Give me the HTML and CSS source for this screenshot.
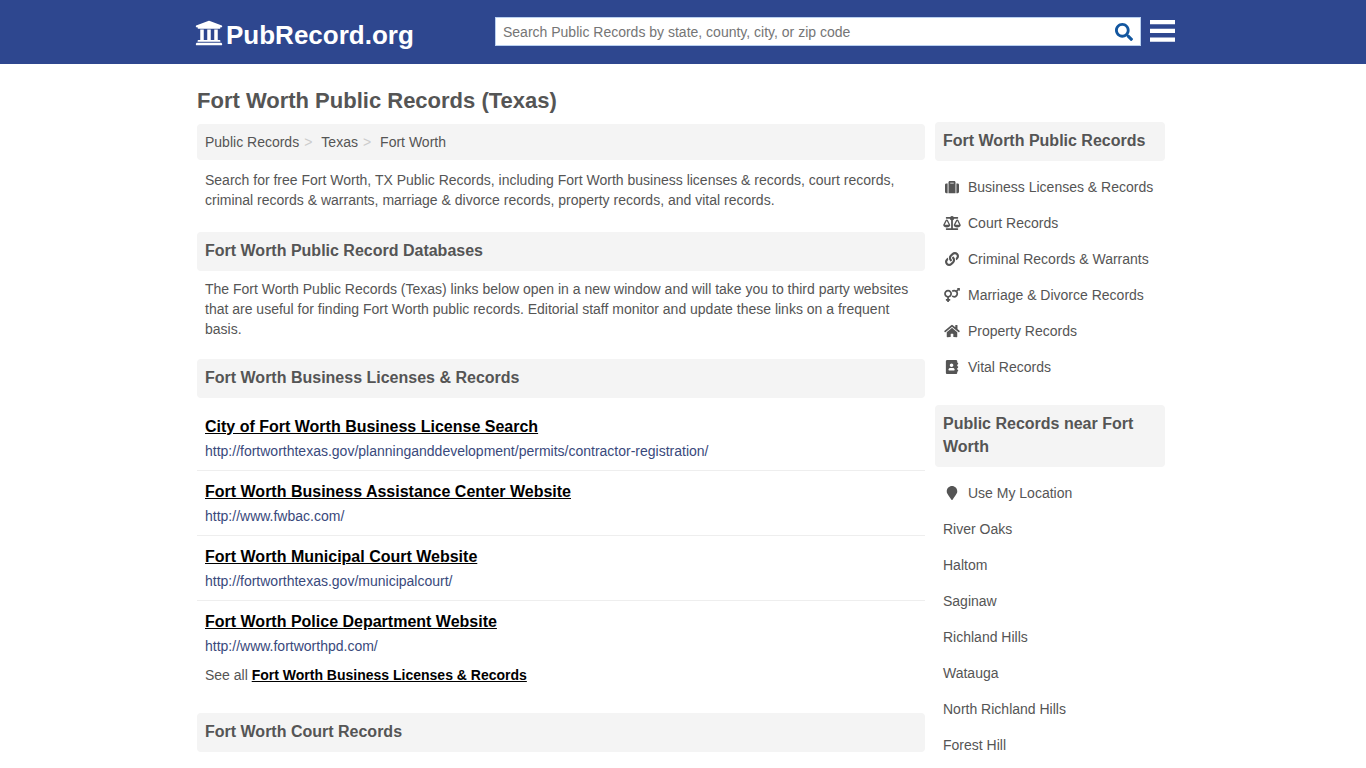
FILE: index.html
```html
<!DOCTYPE html>
<html lang="en">
<head>
<meta charset="utf-8">
<meta name="viewport" content="width=device-width, initial-scale=1">
<title>Fort Worth Public Records (Texas)</title>
<link rel="stylesheet" href="styles.css">
</head>
<body>
<header class="site-header">
  <div class="container header-row">
    <a class="logo" href="#">
      <svg class="logo-icon" viewBox="0 0 512 512" aria-hidden="true"><path d="M496 128v16a8 8 0 0 1-8 8h-24v12c0 6.627-5.373 12-12 12H60c-6.627 0-12-5.373-12-12v-12H24a8 8 0 0 1-8-8v-16a8 8 0 0 1 4.941-7.392l232-88a7.996 7.996 0 0 1 6.118 0l232 88A8 8 0 0 1 496 128zm-24 304H40c-13.255 0-24 10.745-24 24v16a8 8 0 0 0 8 8h464a8 8 0 0 0 8-8v-16c0-13.255-10.745-24-24-24zM96 192v192H60c-6.627 0-12 5.373-12 12v20h416v-20c0-6.627-5.373-12-12-12h-36V192h-64v192h-64V192h-64v192h-64V192H96z"/></svg>
      <span>PubRecord.org</span>
    </a>
    <form class="search" role="search">
      <input class="search-input" type="text" aria-label="Search Public Records" placeholder="Search Public Records by state, county, city, or zip code">
      <button class="search-button" type="button" aria-label="Search">
        <svg class="search-icon" viewBox="0 0 512 512" aria-hidden="true"><path d="M505 442.700L405.300 343c-4.500-4.500-10.600-7-17-7H372c27.600-35.300 44-79.700 44-128C416 93.100 322.900 0 208 0S0 93.100 0 208s93.100 208 208 208c48.300 0 92.700-16.400 128-44v16.300c0 6.400 2.500 12.500 7 17l99.700 99.700c9.400 9.400 24.600 9.400 33.900 0l28.300-28.300c9.400-9.400 9.400-24.600.1-34zM208 336c-70.700 0-128-57.200-128-128 0-70.700 57.200-128 128-128 70.700 0 128 57.200 128 128 0 70.700-57.200 128-128 128z"/></svg>
      </button>
    </form>
    <button class="menu-button" type="button" aria-label="Menu">
      <svg class="menu-icon" viewBox="0 0 25 22" aria-hidden="true"><path d="M0 0h25v4.200H0zM0 8.800h25v4.200H0zM0 17.500h25v4.200H0z"/></svg>
    </button>
  </div>
</header>

<div class="container page">
  <main class="main">
    <h1 class="page-title">Fort Worth Public Records (Texas)</h1>
    <nav class="breadcrumb" aria-label="Breadcrumb">
      <a href="#">Public Records</a><span class="sep">&gt;</span>
      <a href="#">Texas</a><span class="sep">&gt;</span>
      <a href="#">Fort Worth</a>
    </nav>
    <p class="text">Search for free Fort Worth, TX Public Records, including Fort Worth business licenses &amp; records, court records, criminal records &amp; warrants, marriage &amp; divorce records, property records, and vital records.</p>

    <section class="section">
      <h2 class="heading">Fort Worth Public Record Databases</h2>
      <p class="text">The Fort Worth Public Records (Texas) links below open in a new window and will take you to third party websites that are useful for finding Fort Worth public records. Editorial staff monitor and update these links on a frequent basis.</p>
    </section>

    <section class="section">
      <h2 class="heading">Fort Worth Business Licenses &amp; Records</h2>
      <ul class="results">
        <li class="result"><a class="result-title" href="#">City of Fort Worth Business License Search</a><span class="result-url">http://fortworthtexas.gov/planninganddevelopment/permits/contractor-registration/</span></li>
        <li class="result"><a class="result-title" href="#">Fort Worth Business Assistance Center Website</a><span class="result-url">http://www.fwbac.com/</span></li>
        <li class="result"><a class="result-title" href="#">Fort Worth Municipal Court Website</a><span class="result-url">http://fortworthtexas.gov/municipalcourt/</span></li>
        <li class="result"><a class="result-title" href="#">Fort Worth Police Department Website</a><span class="result-url">http://www.fortworthpd.com/</span></li>
      </ul>
      <p class="see-all">See all <a href="#">Fort Worth Business Licenses &amp; Records</a></p>
    </section>

    <section class="section">
      <h2 class="heading">Fort Worth Court Records</h2>
    </section>
  </main>

  <aside class="sidebar">
    <section class="section">
      <h2 class="heading">Fort Worth Public Records</h2>
      <ul class="links">
        <li><a class="link" href="#"><svg class="icon" viewBox="0 0 512 512" aria-hidden="true"><path d="M128 480h256V80c0-26.500-21.500-48-48-48H176c-26.500 0-48 21.500-48 48v400zm64-384h128v32H192V96zm320 80v256c0 26.500-21.500 48-48 48h-48V128h48c26.500 0 48 21.500 48 48zM96 480H48c-26.500 0-48-21.500-48-48V176c0-26.500 21.500-48 48-48h48v352z"/></svg>Business Licenses &amp; Records</a></li>
        <li><a class="link" href="#"><svg class="icon" viewBox="0 0 640 512" aria-hidden="true"><path d="M256 336h-.02c0-16.180 1.340-8.730-85.050-181.510-17.650-35.290-68.190-35.360-85.870 0C-2.060 328.750.02 320.330.02 336H0c0 44.180 57.310 80 128 80s128-35.820 128-80zM128 176l72 144H56l72-144zm511.980 160c0-16.180 1.340-8.730-85.050-181.510-17.650-35.290-68.190-35.360-85.870 0-87.120 174.260-85.040 165.840-85.040 181.510H384c0 44.180 57.310 80 128 80s128-35.820 128-80h-.02zM440 320l72-144 72 144H440zm88 128H352V153.250c23.510-10.290 41.160-31.480 46.390-57.250H528c8.840 0 16-7.160 16-16V48c0-8.840-7.160-16-16-16H383.640C369.040 12.680 346.090 0 320 0s-49.040 12.680-63.640 32H112c-8.840 0-16 7.160-16 16v32c0 8.840 7.160 16 16 16h129.610c5.230 25.760 22.870 46.960 46.390 57.250V448H112c-8.840 0-16 7.160-16 16v32c0 8.840 7.160 16 16 16h416c8.840 0 16-7.160 16-16v-32c0-8.840-7.160-16-16-16z"/></svg>Court Records</a></li>
        <li><a class="link" href="#"><svg class="icon" viewBox="0 0 512 512" aria-hidden="true"><path d="M326.612 185.391c59.747 59.809 58.927 155.698.36 214.590-.11.120-.24.250-.36.370l-67.200 67.200c-59.270 59.270-155.699 59.262-214.960 0-59.270-59.260-59.270-155.700 0-214.960l37.106-37.106c9.840-9.840 26.786-3.300 27.294 10.606.648 17.722 3.826 35.527 9.690 52.721 1.986 5.822.567 12.262-3.783 16.612l-13.087 13.087c-28.026 28.026-28.905 73.660-1.155 101.960 28.024 28.579 74.086 28.749 102.325.510l67.200-67.190c28.191-28.191 28.073-73.757 0-101.830-3.701-3.694-7.429-6.564-10.341-8.569a16.037 16.037 0 0 1-6.947-12.606c-.396-10.567 3.348-21.456 11.698-29.806l21.054-21.055c5.521-5.521 14.182-6.199 20.584-1.731a152.482 152.482 0 0 1 20.522 17.197zM467.547 44.449c-59.261-59.262-155.690-59.270-214.960 0l-67.200 67.200c-.12.120-.25.250-.36.370-58.566 58.892-59.387 154.781.36 214.590a152.454 152.454 0 0 0 20.521 17.196c6.402 4.468 15.064 3.789 20.584-1.731l21.054-21.055c8.350-8.350 12.094-19.239 11.698-29.806a16.037 16.037 0 0 0-6.947-12.606c-2.912-2.005-6.640-4.875-10.341-8.569-28.073-28.073-28.191-73.639 0-101.830l67.200-67.190c28.239-28.239 74.300-28.069 102.325.510 27.750 28.300 26.872 73.934-1.155 101.960l-13.087 13.087c-4.350 4.350-5.769 10.790-3.783 16.612 5.864 17.194 9.042 34.999 9.690 52.721.509 13.906 17.454 20.446 27.294 10.606l37.106-37.106c59.271-59.259 59.271-155.699.001-214.959z"/></svg>Criminal Records &amp; Warrants</a></li>
        <li><a class="link" href="#"><svg class="icon" viewBox="0 0 576 512" aria-hidden="true"><path d="M564 0h-79c-10.700 0-16 12.900-8.500 20.500l16.900 16.900-48.700 48.700C422.500 72.100 396.200 64 368 64c-33.700 0-64.600 11.600-89.200 30.900 14 16.700 25 36 32.100 57.100 14.500-14.800 34.700-24 57.100-24 44.100 0 80 35.900 80 80s-35.900 80-80 80c-22.300 0-42.600-9.200-57.100-24-7.100 21.100-18 40.400-32.100 57.100 24.500 19.400 55.500 30.900 89.200 30.900 79.500 0 144-64.500 144-144 0-28.200-8.100-54.500-22.100-76.700l48.700-48.700 16.900 16.900c2.400 2.400 5.400 3.500 8.400 3.500 6.200 0 12.100-4.800 12.100-12V12c0-6.600-5.400-12-12-12zM144 64C64.500 64 0 128.500 0 208c0 68.500 47.900 125.900 112 140.400V400H76c-6.600 0-12 5.400-12 12v40c0 6.600 5.400 12 12 12h36v36c0 6.600 5.400 12 12 12h40c6.600 0 12-5.400 12-12v-36h36c6.600 0 12-5.400 12-12v-40c0-6.600-5.400-12-12-12h-36v-51.600c64.100-14.600 112-71.900 112-140.400 0-79.500-64.500-144-144-144zm0 224c-44.100 0-80-35.900-80-80s35.900-80 80-80 80 35.900 80 80-35.900 80-80 80z"/></svg>Marriage &amp; Divorce Records</a></li>
        <li><a class="link" href="#"><svg class="icon" viewBox="0 0 576 512" aria-hidden="true"><path d="M280.370 148.260L96 300.110V464a16 16 0 0 0 16 16l112.060-.290a16 16 0 0 0 15.920-16V368a16 16 0 0 1 16-16h64a16 16 0 0 1 16 16v95.640a16 16 0 0 0 16 16.050L464 480a16 16 0 0 0 16-16V300L295.670 148.260a12.190 12.190 0 0 0-15.300 0zM571.600 251.470L488 182.560V44.050a12 12 0 0 0-12-12h-56a12 12 0 0 0-12 12v72.610L318.470 43a48 48 0 0 0-61 0L4.340 251.470a12 12 0 0 0-1.600 16.900l25.500 31A12 12 0 0 0 45.150 301l235.220-193.740a12.190 12.190 0 0 1 15.300 0L530.900 301a12 12 0 0 0 16.900-1.600l25.500-31a12 12 0 0 0-1.700-16.930z"/></svg>Property Records</a></li>
        <li><a class="link" href="#"><svg class="icon" viewBox="0 0 448 512" aria-hidden="true"><path d="M436 160c6.600 0 12-5.400 12-12v-40c0-6.600-5.400-12-12-12h-20V48c0-26.500-21.500-48-48-48H48C21.500 0 0 21.500 0 48v416c0 26.500 21.500 48 48 48h320c26.500 0 48-21.500 48-48v-48h20c6.600 0 12-5.400 12-12v-40c0-6.600-5.400-12-12-12h-20v-64h20c6.600 0 12-5.400 12-12v-40c0-6.600-5.400-12-12-12h-20v-64h20zm-228-32c35.300 0 64 28.700 64 64s-28.700 64-64 64-64-28.700-64-64 28.700-64 64-64zm112 236.800c0 10.600-10 19.200-22.400 19.200H118.400C106 384 96 375.400 96 364.800v-19.200c0-31.800 30.100-57.600 67.200-57.600h5c12.300 5.100 25.700 8 39.800 8s27.600-2.900 39.800-8h5c37.100 0 67.200 25.800 67.200 57.600v19.200z"/></svg>Vital Records</a></li>
      </ul>
    </section>

    <section class="section">
      <h2 class="heading">Public Records near Fort Worth</h2>
      <ul class="links">
        <li><a class="link" href="#"><svg class="icon" viewBox="0 0 384 512" aria-hidden="true"><path d="M172.268 501.670C26.970 291.031 0 269.413 0 192 0 85.961 85.961 0 192 0s192 85.961 192 192c0 77.413-26.970 99.031-172.268 309.670-9.535 13.774-29.930 13.773-39.464 0z"/></svg>Use My Location</a></li>
        <li><a class="link" href="#">River Oaks</a></li>
        <li><a class="link" href="#">Haltom</a></li>
        <li><a class="link" href="#">Saginaw</a></li>
        <li><a class="link" href="#">Richland Hills</a></li>
        <li><a class="link" href="#">Watauga</a></li>
        <li><a class="link" href="#">North Richland Hills</a></li>
        <li><a class="link" href="#">Forest Hill</a></li>
      </ul>
    </section>
  </aside>
</div>
</body>
</html>
```
FILE: styles.css
```css
* { box-sizing: border-box; }

body {
  margin: 0;
  background: #fff;
  color: #555;
  font: 14px/20px "Liberation Sans", Arial, Helvetica, sans-serif;
}

a { color: inherit; text-decoration: none; }
h1, h2, p, ul { margin: 0; }
ul { padding: 0; list-style: none; }
svg { display: block; fill: currentColor; }
button { padding: 0; border: 0; background: none; cursor: pointer; }

.container {
  max-width: 980px;
  margin: 0 auto;
}

.site-header {
  background: #2e478f;
  color: #fff;
}

.header-row {
  display: flex;
  align-items: flex-start;
  padding: 17px 0 11px 2px;
}

.logo {
  display: flex;
  align-items: flex-start;
  gap: 3px;
  flex: 0 0 300px;
  padding: 2px 0;
  font-size: 26px;
  font-weight: bold;
  line-height: 32px;
}

.logo-icon { width: 28px; height: 28px; }

.search {
  display: flex;
  align-items: center;
  flex: 1;
  height: 29px;
  border: 1px solid #b9d0f0;
  background: #fff;
}

.search-input {
  flex: 1;
  min-width: 0;
  height: 27px;
  padding: 0 7px;
  border: 0;
  outline: 0;
  background: none;
  font: inherit;
}

.search-input::placeholder { color: #757575; }
.search-button { padding: 0 7px; color: #12569f; }
.search-icon { width: 18px; height: 18px; }

.menu-button {
  flex: none;
  margin: 3px -2px 0 9px;
  color: #fff;
}

.menu-icon { width: 25px; height: 22px; }

.page {
  display: flex;
  gap: 10px;
  padding: 0 8px 20px 4px;
}

.main { flex: 1; min-width: 0; }
.sidebar { flex: 0 0 230px; padding-top: 58px; }

.page-title {
  padding: 22px 0 8px;
  font-size: 22px;
  line-height: 30px;
}

.breadcrumb {
  display: flex;
  padding: 8px;
  border-radius: 4px;
  background: #f4f4f4;
}

.sep { margin: 0 9px 0 5px; color: #ccc; }

.text { padding: 10px 8px 0; }
.heading + .text { padding-top: 8px; }
.section { margin-bottom: 20px; }
.text + .section { margin-top: 22px; }

.heading {
  padding: 7px 8px 9px;
  border-radius: 4px;
  background: #f4f4f4;
  font-size: 16px;
  line-height: 23px;
}

.results { padding-top: 8px; }

.result {
  padding: 9px 8px 7px;
  border-bottom: 1px solid #eee;
}

.result:last-child { border-bottom: 0; }

.result-title {
  display: block;
  color: #000;
  font-size: 16px;
  font-weight: bold;
  line-height: 24px;
  text-decoration: underline;
}

.result-url {
  display: block;
  color: #39497c;
  line-height: 24px;
  overflow-wrap: anywhere;
}

.see-all { padding: 0 8px 8px; }

.see-all a {
  color: #000;
  font-weight: bold;
  text-decoration: underline;
}

.links { padding-top: 8px; }

.link {
  display: flex;
  align-items: center;
  gap: 7px;
  padding: 8px;
}

.icon { width: 18px; height: 14px; }
```
